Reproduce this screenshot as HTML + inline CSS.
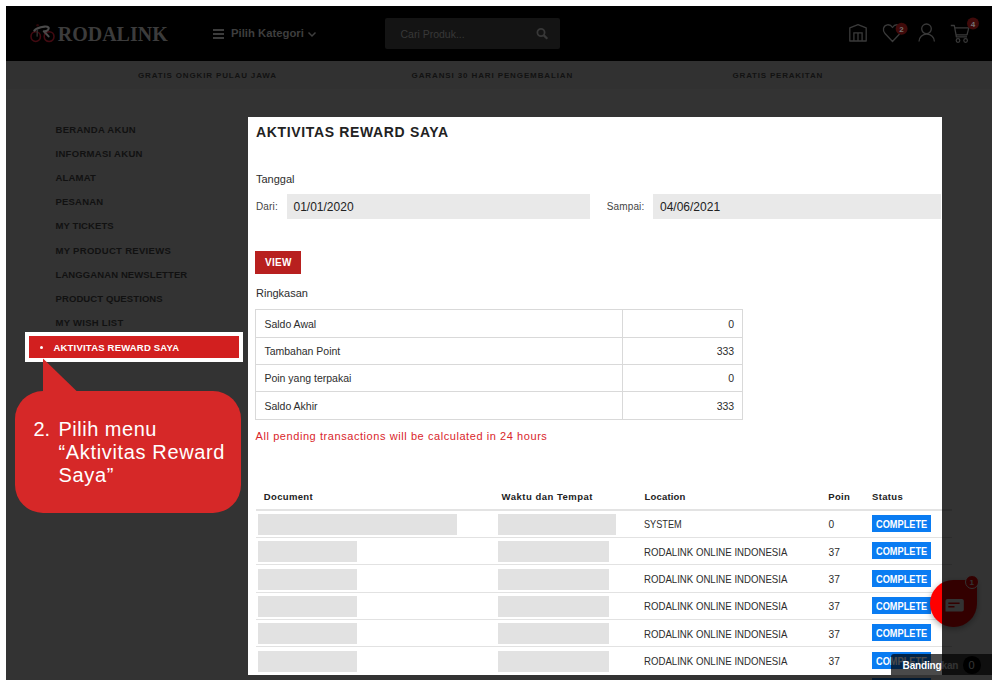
<!DOCTYPE html>
<html><head><meta charset="utf-8"><style>
html,body{margin:0;padding:0;}
body{width:999px;height:687px;background:#fff;position:relative;overflow:hidden;font-family:'Liberation Sans', sans-serif;}
.t{position:absolute;white-space:nowrap;line-height:1;}
.r{position:absolute;}
</style></head><body>
<div class="r" style="left:6px;top:6px;width:986px;height:674px;background:#333;"></div>
<div class="r" style="left:6px;top:61px;width:986px;height:28px;background:#313131;"></div>
<div class="r" style="left:6px;top:6px;width:986px;height:55px;background:#000;"></div>
<svg class="r" style="left:26px;top:18px" width="34" height="30" viewBox="26 18 34 30">
<ellipse cx="35.7" cy="36.6" rx="4.7" ry="4.9" stroke="#420a11" stroke-width="1.6" fill="none"/>
<ellipse cx="49.1" cy="36.6" rx="4.9" ry="4.9" stroke="#420a11" stroke-width="1.6" fill="none"/>
<circle cx="37.6" cy="25.3" r="1.3" fill="#2a0608"/>
<path d="M34.3 30.6 C36 28.2 40 27.2 44.5 26.6 C48.2 26.2 49.6 27.8 48 29.8 C47 31 45.3 31.4 43.8 31.3 L48.6 36.4" stroke="#4a4a4a" stroke-width="2.1" fill="none" stroke-linecap="round" stroke-linejoin="round"/>
<path d="M37.4 29.6 L37.1 36.6" stroke="#2e2e2e" stroke-width="1.5" fill="none"/>
</svg>
<div class="t" style="left:57.70px;top:23.85px;font-size:20px;color:#3c3c3c;font-weight:bold;letter-spacing:0px;font-family:'Liberation Serif', serif;">RODALINK</div>
<div class="r" style="left:213px;top:29px;width:11px;height:1.5px;background:#3c3c3c;"></div>
<div class="r" style="left:213px;top:33px;width:11px;height:1.5px;background:#3c3c3c;"></div>
<div class="r" style="left:213px;top:37px;width:11px;height:1.5px;background:#3c3c3c;"></div>
<div class="t" style="left:231.00px;top:27.63px;font-size:11.3px;color:#3e3e3e;font-weight:bold;letter-spacing:0px;font-family:'Liberation Sans', sans-serif;">Pilih Kategori</div>
<svg class="r" style="left:307px;top:30px" width="10" height="8" viewBox="0 0 10 8"><path d="M1.5 2.5 L5 6 L8.5 2.5" stroke="#3e3e3e" stroke-width="1.5" fill="none"/></svg>
<div class="r" style="left:385px;top:18px;width:175px;height:31px;background:#141414;border-radius:2px"></div>
<div class="t" style="left:400.50px;top:29.11px;font-size:10.5px;color:#383838;font-weight:normal;letter-spacing:0px;font-family:'Liberation Sans', sans-serif;">Cari Produk...</div>
<svg class="r" style="left:535px;top:27px" width="14" height="13" viewBox="0 0 14 13"><circle cx="6" cy="5.5" r="3.6" stroke="#383838" stroke-width="1.8" fill="none"/><path d="M8.6 8.1 L12.3 11.8" stroke="#383838" stroke-width="2.2"/></svg>
<svg class="r" style="left:840px;top:10px" width="150" height="40" viewBox="840 10 150 40">
<path d="M849.8 41 L849.8 27.9 L858 24.6 L866.2 27.9 L866.2 41 Z" stroke="#3a3a3a" stroke-width="1.3" fill="none" stroke-linejoin="round"/>
<path d="M853.9 41 L853.9 32.8 L862.1 32.8 L862.1 41 M858 32.8 L858 41" stroke="#3a3a3a" stroke-width="1.3" fill="none"/>
<path d="M892.5 41.5 L885 33.5 C882.3 30.6 883 25.4 887.3 24.8 C889.8 24.5 891.6 26 892.5 27.5 C893.4 26 895.2 24.5 897.7 24.8 C902 25.4 902.7 30.6 900 33.5 Z" stroke="#3a3a3a" stroke-width="1.3" fill="none" stroke-linejoin="round"/>
<circle cx="901.6" cy="28.7" r="6" fill="#400a0a"/>
<text x="901.6" y="31.6" font-family="Liberation Sans" font-weight="bold" font-size="8" fill="#747474" text-anchor="middle">2</text>
<circle cx="926.5" cy="28.8" r="4.8" stroke="#3a3a3a" stroke-width="1.3" fill="none"/>
<path d="M919 41.5 A7.7 7.3 0 0 1 934.4 41.5" stroke="#3a3a3a" stroke-width="1.3" fill="none"/>
<path d="M950.8 25.5 L954.3 25.5 L956.4 36.8 L967 36.8 M955 27.9 L968.8 27.9 L967 34.9 L956.2 34.9" stroke="#3a3a3a" stroke-width="1.3" fill="none" stroke-linejoin="round"/>
<circle cx="958" cy="40.5" r="1.8" stroke="#3a3a3a" stroke-width="1.2" fill="none"/>
<circle cx="965.6" cy="40.5" r="1.8" stroke="#3a3a3a" stroke-width="1.2" fill="none"/>
<circle cx="973" cy="23.6" r="6" fill="#400a0a"/>
<text x="973" y="26.5" font-family="Liberation Sans" font-weight="bold" font-size="8" fill="#747474" text-anchor="middle">4</text>
</svg>
<div class="t" style="left:138.00px;top:72.23px;font-size:8px;color:#121212;font-weight:bold;letter-spacing:0.85px;font-family:'Liberation Sans', sans-serif;">GRATIS ONGKIR PULAU JAWA</div>
<div class="t" style="left:411.60px;top:72.23px;font-size:8px;color:#121212;font-weight:bold;letter-spacing:0.88px;font-family:'Liberation Sans', sans-serif;">GARANSI 30 HARI PENGEMBALIAN</div>
<div class="t" style="left:732.60px;top:72.23px;font-size:8px;color:#121212;font-weight:bold;letter-spacing:0.78px;font-family:'Liberation Sans', sans-serif;">GRATIS PERAKITAN</div>
<div class="t" style="left:55.50px;top:124.56px;font-size:9.5px;color:#111;font-weight:bold;letter-spacing:0.3px;font-family:'Liberation Sans', sans-serif;">BERANDA AKUN</div>
<div class="t" style="left:55.50px;top:148.76px;font-size:9.5px;color:#111;font-weight:bold;letter-spacing:0.3px;font-family:'Liberation Sans', sans-serif;">INFORMASI AKUN</div>
<div class="t" style="left:55.50px;top:172.96px;font-size:9.5px;color:#111;font-weight:bold;letter-spacing:0.2px;font-family:'Liberation Sans', sans-serif;">ALAMAT</div>
<div class="t" style="left:55.50px;top:197.16px;font-size:9.5px;color:#111;font-weight:bold;letter-spacing:0.2px;font-family:'Liberation Sans', sans-serif;">PESANAN</div>
<div class="t" style="left:55.50px;top:221.36px;font-size:9.5px;color:#111;font-weight:bold;letter-spacing:0.09px;font-family:'Liberation Sans', sans-serif;">MY TICKETS</div>
<div class="t" style="left:55.50px;top:245.56px;font-size:9.5px;color:#111;font-weight:bold;letter-spacing:0.3px;font-family:'Liberation Sans', sans-serif;">MY PRODUCT REVIEWS</div>
<div class="t" style="left:55.50px;top:269.76px;font-size:9.5px;color:#111;font-weight:bold;letter-spacing:0.1px;font-family:'Liberation Sans', sans-serif;">LANGGANAN NEWSLETTER</div>
<div class="t" style="left:55.50px;top:293.96px;font-size:9.5px;color:#111;font-weight:bold;letter-spacing:0.1px;font-family:'Liberation Sans', sans-serif;">PRODUCT QUESTIONS</div>
<div class="t" style="left:55.50px;top:318.16px;font-size:9.5px;color:#111;font-weight:bold;letter-spacing:0.27px;font-family:'Liberation Sans', sans-serif;">MY WISH LIST</div>
<div class="r" style="left:25px;top:332px;width:218px;height:30px;background:#fff;"></div>
<div class="r" style="left:29px;top:336px;width:210px;height:22px;background:#d21f1f;"></div>
<div class="r" style="left:39.5px;top:346px;width:3px;height:3px;border-radius:50%;background:#fff"></div>
<div class="t" style="left:53.50px;top:342.96px;font-size:9.5px;color:#fff;font-weight:bold;letter-spacing:0.2px;font-family:'Liberation Sans', sans-serif;">AKTIVITAS REWARD SAYA</div>
<div class="r" style="left:15px;top:391px;width:226px;height:122px;background:#d62828;border-radius:28px"></div>
<svg class="r" style="left:0;top:0" width="100" height="400"><path d="M43 358.5 L43 395 L80 395 L76.8 391.2 Z" fill="#d62828"/></svg>
<div class="t" style="left:33.50px;top:418.77px;font-size:20px;color:#fff;font-weight:normal;letter-spacing:0px;font-family:'Liberation Sans', sans-serif;">2.</div>
<div class="t" style="left:58.50px;top:418.77px;font-size:20px;color:#fff;font-weight:normal;letter-spacing:0.5px;font-family:'Liberation Sans', sans-serif;">Pilih menu</div>
<div class="t" style="left:58.50px;top:441.57px;font-size:20px;color:#fff;font-weight:normal;letter-spacing:0.65px;font-family:'Liberation Sans', sans-serif;">“Aktivitas Reward</div>
<div class="t" style="left:58.50px;top:464.57px;font-size:20px;color:#fff;font-weight:normal;letter-spacing:0.65px;font-family:'Liberation Sans', sans-serif;">Saya”</div>
<div class="r" style="left:942px;top:117px;width:50px;height:558px;overflow:hidden;background:#fff">
<div class="r" style="left:0px;top:392px;width:10px;height:2px;background:#ddd;"></div>
<div class="r" style="left:0px;top:420px;width:10px;height:1px;background:#ddd;"></div>
<div class="r" style="left:0px;top:447px;width:10px;height:1px;background:#ddd;"></div>
<div class="r" style="left:0px;top:475px;width:10px;height:1px;background:#ddd;"></div>
<div class="r" style="left:0px;top:502px;width:10px;height:1px;background:#ddd;"></div>
<div class="r" style="left:0px;top:529px;width:10px;height:1px;background:#ddd;"></div>
</div>
<div class="r" style="left:248px;top:117px;width:694px;height:558px;background:#fff;"></div>
<div class="t" style="left:256.00px;top:124.65px;font-size:14px;color:#222;font-weight:bold;letter-spacing:0.65px;font-family:'Liberation Sans', sans-serif;">AKTIVITAS REWARD SAYA</div>
<div class="t" style="left:256.00px;top:173.69px;font-size:11px;color:#2d2d2d;font-weight:normal;letter-spacing:0px;font-family:'Liberation Sans', sans-serif;">Tanggal</div>
<div class="t" style="left:256.00px;top:202.34px;font-size:10px;color:#444;font-weight:normal;letter-spacing:0.15px;font-family:'Liberation Sans', sans-serif;">Dari:</div>
<div class="r" style="left:287px;top:194px;width:303px;height:25px;background:#e9e9e9;"></div>
<div class="t" style="left:293.50px;top:201.34px;font-size:12px;color:#222;font-weight:normal;letter-spacing:0px;font-family:'Liberation Sans', sans-serif;">01/01/2020</div>
<div class="t" style="left:606.70px;top:202.34px;font-size:10px;color:#444;font-weight:normal;letter-spacing:0.15px;font-family:'Liberation Sans', sans-serif;">Sampai:</div>
<div class="r" style="left:653px;top:194px;width:288px;height:25px;background:#e9e9e9;"></div>
<div class="t" style="left:660.00px;top:201.34px;font-size:12px;color:#222;font-weight:normal;letter-spacing:0px;font-family:'Liberation Sans', sans-serif;">04/06/2021</div>
<div class="r" style="left:255px;top:251px;width:46px;height:23px;background:#b8201f;"></div>
<div class="t" style="left:265.00px;top:257.54px;font-size:10px;color:#fff;font-weight:bold;letter-spacing:0.3px;font-family:'Liberation Sans', sans-serif;">VIEW</div>
<div class="t" style="left:256.00px;top:288.29px;font-size:11px;color:#2d2d2d;font-weight:normal;letter-spacing:0px;font-family:'Liberation Sans', sans-serif;">Ringkasan</div>
<div class="r" style="left:255px;top:309px;width:488px;height:111px;background:transparent;border:1px solid #d9d9d9;box-sizing:border-box"></div>
<div class="r" style="left:255px;top:337px;width:488px;height:1px;background:#d9d9d9;"></div>
<div class="r" style="left:255px;top:364px;width:488px;height:1px;background:#d9d9d9;"></div>
<div class="r" style="left:255px;top:391px;width:488px;height:1px;background:#d9d9d9;"></div>
<div class="r" style="left:622px;top:309px;width:1px;height:111px;background:#d9d9d9;"></div>
<div class="t" style="left:264.40px;top:318.51px;font-size:10.5px;color:#2d2d2d;font-weight:normal;letter-spacing:0px;font-family:'Liberation Sans', sans-serif;">Saldo Awal</div>
<div class="t" style="right:264.80px;top:318.51px;font-size:10.5px;color:#2d2d2d;font-weight:normal;letter-spacing:0px;font-family:'Liberation Sans', sans-serif;">0</div>
<div class="t" style="left:264.40px;top:345.91px;font-size:10.5px;color:#2d2d2d;font-weight:normal;letter-spacing:0px;font-family:'Liberation Sans', sans-serif;">Tambahan Point</div>
<div class="t" style="right:264.80px;top:345.91px;font-size:10.5px;color:#2d2d2d;font-weight:normal;letter-spacing:0px;font-family:'Liberation Sans', sans-serif;">333</div>
<div class="t" style="left:264.40px;top:373.31px;font-size:10.5px;color:#2d2d2d;font-weight:normal;letter-spacing:0px;font-family:'Liberation Sans', sans-serif;">Poin yang terpakai</div>
<div class="t" style="right:264.80px;top:373.31px;font-size:10.5px;color:#2d2d2d;font-weight:normal;letter-spacing:0px;font-family:'Liberation Sans', sans-serif;">0</div>
<div class="t" style="left:264.40px;top:400.71px;font-size:10.5px;color:#2d2d2d;font-weight:normal;letter-spacing:0px;font-family:'Liberation Sans', sans-serif;">Saldo Akhir</div>
<div class="t" style="right:264.80px;top:400.71px;font-size:10.5px;color:#2d2d2d;font-weight:normal;letter-spacing:0px;font-family:'Liberation Sans', sans-serif;">333</div>
<div class="t" style="left:255.60px;top:430.69px;font-size:11px;color:#d9262b;font-weight:normal;letter-spacing:0.57px;font-family:'Liberation Sans', sans-serif;">All pending transactions will be calculated in 24 hours</div>
<div class="t" style="left:263.80px;top:492.16px;font-size:9.5px;color:#222;font-weight:bold;letter-spacing:0.34px;font-family:'Liberation Sans', sans-serif;">Document</div>
<div class="t" style="left:501.60px;top:492.16px;font-size:9.5px;color:#222;font-weight:bold;letter-spacing:0.5px;font-family:'Liberation Sans', sans-serif;">Waktu dan Tempat</div>
<div class="t" style="left:644.50px;top:492.16px;font-size:9.5px;color:#222;font-weight:bold;letter-spacing:0.18px;font-family:'Liberation Sans', sans-serif;">Location</div>
<div class="t" style="left:828.30px;top:492.16px;font-size:9.5px;color:#222;font-weight:bold;letter-spacing:0.27px;font-family:'Liberation Sans', sans-serif;">Poin</div>
<div class="t" style="left:872.00px;top:492.16px;font-size:9.5px;color:#222;font-weight:bold;letter-spacing:0.33px;font-family:'Liberation Sans', sans-serif;">Status</div>
<div class="r" style="left:256px;top:509px;width:686px;height:2px;background:#e3e3e3;"></div>
<div class="r" style="left:256px;top:537px;width:686px;height:1px;background:#e2e2e2;"></div>
<div class="r" style="left:258px;top:514px;width:199px;height:21px;background:#e2e2e2;"></div>
<div class="r" style="left:498px;top:514px;width:118px;height:21px;background:#e2e2e2;"></div>
<div class="t" style="left:644.30px;top:520.17px;font-size:10.2px;color:#2d2d2d;font-weight:normal;letter-spacing:0px;font-family:'Liberation Sans', sans-serif;transform:scaleX(0.9);transform-origin:0 0;">SYSTEM</div>
<div class="t" style="left:828.50px;top:520.17px;font-size:10.2px;color:#2d2d2d;font-weight:normal;letter-spacing:0px;font-family:'Liberation Sans', sans-serif;">0</div>
<div class="r" style="left:872px;top:515px;width:59px;height:17px;background:#0a7cf2;"></div>
<div class="t" style="left:876.20px;top:519.03px;font-size:10.6px;color:#fff;font-weight:bold;letter-spacing:0px;font-family:'Liberation Sans', sans-serif;transform:scaleX(0.87);transform-origin:0 0;">COMPLETE</div>
<div class="r" style="left:256px;top:564px;width:686px;height:1px;background:#e2e2e2;"></div>
<div class="r" style="left:258px;top:541px;width:99px;height:21px;background:#e2e2e2;"></div>
<div class="r" style="left:498px;top:541px;width:111px;height:21px;background:#e2e2e2;"></div>
<div class="t" style="left:644.30px;top:547.52px;font-size:10.2px;color:#2d2d2d;font-weight:normal;letter-spacing:0px;font-family:'Liberation Sans', sans-serif;transform:scaleX(0.945);transform-origin:0 0;">RODALINK ONLINE INDONESIA</div>
<div class="t" style="left:828.50px;top:547.52px;font-size:10.2px;color:#2d2d2d;font-weight:normal;letter-spacing:0px;font-family:'Liberation Sans', sans-serif;">37</div>
<div class="r" style="left:872px;top:542px;width:59px;height:17px;background:#0a7cf2;"></div>
<div class="t" style="left:876.20px;top:546.38px;font-size:10.6px;color:#fff;font-weight:bold;letter-spacing:0px;font-family:'Liberation Sans', sans-serif;transform:scaleX(0.87);transform-origin:0 0;">COMPLETE</div>
<div class="r" style="left:256px;top:592px;width:686px;height:1px;background:#e2e2e2;"></div>
<div class="r" style="left:258px;top:569px;width:99px;height:21px;background:#e2e2e2;"></div>
<div class="r" style="left:498px;top:569px;width:111px;height:21px;background:#e2e2e2;"></div>
<div class="t" style="left:644.30px;top:574.87px;font-size:10.2px;color:#2d2d2d;font-weight:normal;letter-spacing:0px;font-family:'Liberation Sans', sans-serif;transform:scaleX(0.945);transform-origin:0 0;">RODALINK ONLINE INDONESIA</div>
<div class="t" style="left:828.50px;top:574.87px;font-size:10.2px;color:#2d2d2d;font-weight:normal;letter-spacing:0px;font-family:'Liberation Sans', sans-serif;">37</div>
<div class="r" style="left:872px;top:570px;width:59px;height:17px;background:#0a7cf2;"></div>
<div class="t" style="left:876.20px;top:573.73px;font-size:10.6px;color:#fff;font-weight:bold;letter-spacing:0px;font-family:'Liberation Sans', sans-serif;transform:scaleX(0.87);transform-origin:0 0;">COMPLETE</div>
<div class="r" style="left:256px;top:619px;width:686px;height:1px;background:#e2e2e2;"></div>
<div class="r" style="left:258px;top:596px;width:99px;height:21px;background:#e2e2e2;"></div>
<div class="r" style="left:498px;top:596px;width:111px;height:21px;background:#e2e2e2;"></div>
<div class="t" style="left:644.30px;top:602.22px;font-size:10.2px;color:#2d2d2d;font-weight:normal;letter-spacing:0px;font-family:'Liberation Sans', sans-serif;transform:scaleX(0.945);transform-origin:0 0;">RODALINK ONLINE INDONESIA</div>
<div class="t" style="left:828.50px;top:602.22px;font-size:10.2px;color:#2d2d2d;font-weight:normal;letter-spacing:0px;font-family:'Liberation Sans', sans-serif;">37</div>
<div class="r" style="left:872px;top:597px;width:59px;height:17px;background:#0a7cf2;"></div>
<div class="t" style="left:876.20px;top:601.08px;font-size:10.6px;color:#fff;font-weight:bold;letter-spacing:0px;font-family:'Liberation Sans', sans-serif;transform:scaleX(0.87);transform-origin:0 0;">COMPLETE</div>
<div class="r" style="left:256px;top:646px;width:686px;height:1px;background:#e2e2e2;"></div>
<div class="r" style="left:258px;top:623px;width:99px;height:21px;background:#e2e2e2;"></div>
<div class="r" style="left:498px;top:623px;width:111px;height:21px;background:#e2e2e2;"></div>
<div class="t" style="left:644.30px;top:629.57px;font-size:10.2px;color:#2d2d2d;font-weight:normal;letter-spacing:0px;font-family:'Liberation Sans', sans-serif;transform:scaleX(0.945);transform-origin:0 0;">RODALINK ONLINE INDONESIA</div>
<div class="t" style="left:828.50px;top:629.57px;font-size:10.2px;color:#2d2d2d;font-weight:normal;letter-spacing:0px;font-family:'Liberation Sans', sans-serif;">37</div>
<div class="r" style="left:872px;top:624px;width:59px;height:17px;background:#0a7cf2;"></div>
<div class="t" style="left:876.20px;top:628.43px;font-size:10.6px;color:#fff;font-weight:bold;letter-spacing:0px;font-family:'Liberation Sans', sans-serif;transform:scaleX(0.87);transform-origin:0 0;">COMPLETE</div>
<div class="r" style="left:258px;top:651px;width:99px;height:21px;background:#e2e2e2;"></div>
<div class="r" style="left:498px;top:651px;width:111px;height:21px;background:#e2e2e2;"></div>
<div class="t" style="left:644.30px;top:656.92px;font-size:10.2px;color:#2d2d2d;font-weight:normal;letter-spacing:0px;font-family:'Liberation Sans', sans-serif;transform:scaleX(0.945);transform-origin:0 0;">RODALINK ONLINE INDONESIA</div>
<div class="t" style="left:828.50px;top:656.92px;font-size:10.2px;color:#2d2d2d;font-weight:normal;letter-spacing:0px;font-family:'Liberation Sans', sans-serif;">37</div>
<div class="r" style="left:872px;top:652px;width:59px;height:17px;background:#0a7cf2;"></div>
<div class="t" style="left:876.20px;top:655.78px;font-size:10.6px;color:#fff;font-weight:bold;letter-spacing:0px;font-family:'Liberation Sans', sans-serif;transform:scaleX(0.87);transform-origin:0 0;">COMPLETE</div>
<div class="r" style="left:930.2px;top:580.3px;width:46.4px;height:47px;background:#f00;border-radius:50% 0 50% 50%;box-shadow:0 2px 6px rgba(0,0,0,0.35)"></div>
<svg class="r" style="left:940px;top:590px" width="30" height="30" viewBox="940 590 30 30">
<path d="M947.5 599 L961.8 599 C963 599 963.8 599.8 963.8 601 L963.8 609.4 C963.8 610.6 963 611.4 961.8 611.4 L945.5 611.4 L945.5 601 C945.5 599.8 946.3 599 947.5 599 Z" fill="#fff"/>
<path d="M948.3 603.3 L959.6 603.3 M948.3 606.8 L954.5 606.8" stroke="#f00" stroke-width="1.4"/>
</svg>
<div class="r" style="left:966.5px;top:576.3px;width:12px;height:12px;border-radius:50%;background:#f00;border:1.5px solid #fff;box-sizing:content-box;margin:-1.5px"></div>
<div class="t" style="left:969.60px;top:579.43px;font-size:8px;color:#fff;font-weight:bold;letter-spacing:0px;font-family:'Liberation Sans', sans-serif;">1</div>
<div class="r" style="left:890.7px;top:654.4px;width:101.3px;height:20.6px;background:rgba(0,0,0,0.71);border-radius:3px 0 0 0"></div>
<div class="t" style="left:902.60px;top:661.03px;font-size:10px;color:#fff;font-weight:bold;letter-spacing:-0.15px;font-family:'Liberation Sans', sans-serif;">Bandingkan</div>
<div class="r" style="left:963.2px;top:656px;width:17.6px;height:17.6px;border-radius:50%;background:#000"></div>
<div class="t" style="left:968.50px;top:659.69px;font-size:11px;color:#fff;font-weight:normal;letter-spacing:0px;font-family:'Liberation Sans', sans-serif;">0</div>
<div class="r" style="left:942px;top:117px;width:50px;height:558px;background:rgba(0,0,0,0.8);"></div>
<div class="r" style="left:6px;top:675px;width:986px;height:5px;background:#333;"></div>
<div class="r" style="left:872px;top:678px;width:59px;height:2px;background:#021930;"></div>
</body></html>
